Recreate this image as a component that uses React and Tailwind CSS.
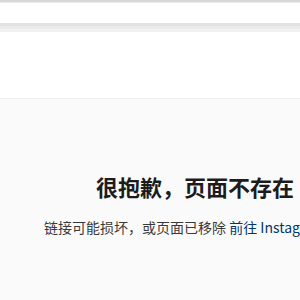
import React from 'react';

const App = () => {
  return (
    <div
      className="w-[300px] h-[300px] overflow-hidden bg-[#fafafa] text-[#262626]"
      style={{ fontFamily: '"Noto Sans CJK SC", "Noto Sans", sans-serif' }}
    >
      {/* top chrome */}
      <div className="bg-white">
        <div className="h-[2px] bg-[#d8d8d8]" />
        <div className="h-[1px] bg-[#ececec]" />
        <div className="h-[20px] bg-white" />
        <div className="h-[3px] bg-[#e2e2e2]" />
        <div className="h-[3px] bg-[#e9e9e9]" />
        <div className="h-[3px] bg-[#f1f1f1]" />
        <div className="h-[66px] bg-white" />
        <div className="h-[1px] bg-[#f0f0f0]" />
      </div>

      {/* message */}
      <div className="w-[390px] pt-[74px] text-center">
        <h2 className="text-[22px] leading-[26px] font-bold text-[#1c1c1c]">很抱歉，页面不存在</h2>
        <p className="mt-[19px] pr-[6px] text-[14px] leading-[18px] whitespace-nowrap text-[#3a3a3a]">
          链接可能损坏，或页面已移除 <a className="text-[#00376b]">前往 Instagram</a>。
        </p>
      </div>
    </div>
  );
};

export default App;
